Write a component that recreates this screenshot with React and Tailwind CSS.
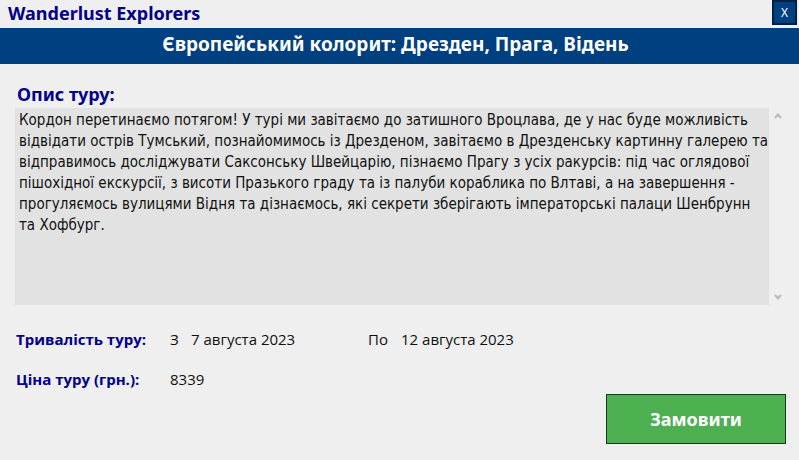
const DESCRIPTION = [
  'Кордон перетинаємо потягом! У турі ми завітаємо до затишного Вроцлава, де у нас буде можливість',
  'відвідати острів Тумський, познайомимось із Дрезденом, завітаємо в Дрезденську картинну галерею та',
  'відправимось досліджувати Саксонську Швейцарію, пізнаємо Прагу з усіх ракурсів: під час оглядової',
  'пішохідної екскурсії, з висоти Празького граду та із палуби кораблика по Влтаві, а на завершення -',
  'прогуляємось вулицями Відня та дізнаємось, які секрети зберігають імператорські палаци Шенбрунн',
  'та Хофбург.',
].join('\n');

function ScrollButton({ label, points }) {
  return (
    <button type="button" aria-label={label} className="flex h-4 w-4 items-center justify-center">
      <svg width="8" height="6" viewBox="0 0 8 6" fill="none" stroke="#b8b8b8" strokeWidth="2">
        <polyline points={points} />
      </svg>
    </button>
  );
}

function TitleBar() {
  return (
    <header className="flex h-7 items-start justify-between pr-[2px] pl-2">
      <span className="text-[18px] leading-[27px] font-bold text-[#00008b]">Wanderlust Explorers</span>
      <button
        type="button"
        className="flex h-[25px] w-[25px] items-center justify-center border-2 border-[#001f45] bg-[#004080] text-[12px] text-white"
      >
        X
      </button>
    </header>
  );
}

function Description() {
  return (
    <section className="flex flex-col pt-4 pr-[13px] pl-[15px]">
      <label htmlFor="description" className="pl-[2px] text-[18px] leading-[28px] font-bold text-[#00008b]">
        Опис туру:
      </label>
      <div className="flex">
        <textarea
          id="description"
          readOnly
          wrap="off"
          value={DESCRIPTION}
          className="h-[197px] min-w-0 flex-1 resize-none overflow-hidden bg-[#e2e2e2] pt-[2px] pr-0 pl-1 font-['DejaVu_Sans_Condensed','Noto_Sans',sans-serif] text-[15px] leading-[21px] text-[#111] outline-none"
        />
        <div className="ml-px flex w-4 flex-col justify-between">
          <ScrollButton label="Вгору" points="1,5 4,1.5 7,5" />
          <ScrollButton label="Вниз" points="1,1 4,4.5 7,1" />
        </div>
      </div>
    </section>
  );
}

export default function App() {
  return (
    <div className="flex min-h-screen flex-col bg-[#efefef] font-['Noto_Sans','Open_Sans',sans-serif]">
      <TitleBar />
      <h1 className="bg-[#004080] pr-2 pb-1 text-center text-[19px] leading-8 font-bold text-white">
        Європейський колорит: Дрезден, Прага, Відень
      </h1>
      <Description />
      <dl className="flex flex-col gap-4 pt-[22px] pl-4 font-['Open_Sans','Noto_Sans',sans-serif] text-[15px] leading-6 text-[#111]">
        <div className="flex">
          <dt className="w-[154px] font-bold text-[#00008b]">Тривалість туру:</dt>
          <dd className="flex">
            <span className="w-[21px]">З</span>
            <time dateTime="2023-08-07" className="w-[177px]">7 августа 2023</time>
            <span className="w-[33px]">По</span>
            <time dateTime="2023-08-12">12 августа 2023</time>
          </dd>
        </div>
        <div className="flex">
          <dt className="w-[154px] font-bold text-[#00008b]">Ціна туру (грн.):</dt>
          <dd>8339</dd>
        </div>
      </dl>
      <div className="flex justify-end pt-[3px] pr-[13px]">
        <button
          type="button"
          className="h-[50px] w-[180px] border border-[#173a19] bg-[#4caf50] text-[18px] font-bold text-white"
        >
          Замовити
        </button>
      </div>
    </div>
  );
}
